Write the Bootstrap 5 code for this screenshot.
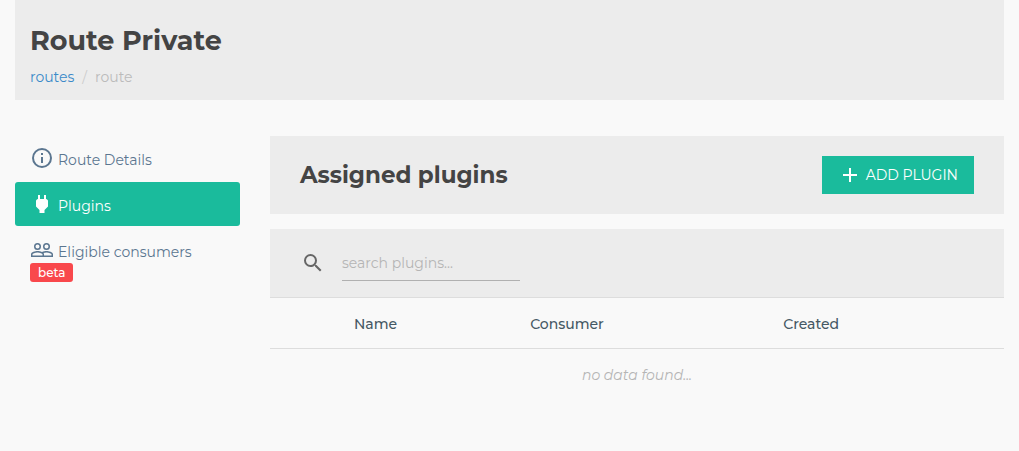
<!DOCTYPE html>
<html lang="en">
<head>
<meta charset="utf-8">
<meta name="viewport" content="width=device-width, initial-scale=1">
<title>Route Private</title>
<link href="https://cdn.jsdelivr.net/npm/bootstrap@5.3.0/dist/css/bootstrap.min.css" rel="stylesheet">
<style>
body{font-family:Montserrat,"Open Sans",sans-serif;font-size:14px;line-height:20px;background:#f9f9f9;color:#444}
.page{padding:0 15px}
.panel{background:#ececec}
.page-head{padding:25px 15px 13px}
h1{font-size:27px;line-height:32px;font-weight:700;margin:0 0 10px}
h2{font-size:23px;line-height:30px;font-weight:700;margin:0}
.breadcrumb{--bs-breadcrumb-divider-color:#ccc;--bs-breadcrumb-item-active-color:#bbb;--bs-breadcrumb-item-padding-x:8px}
.breadcrumb a{color:#3a8ac9;text-decoration:none}
.content-area{margin-top:36px;gap:30px}
.side{width:225px;gap:2px}
.side .nav-link{color:#5b7690;padding:10px 15px;border-radius:3px}
.side .nav-link:hover{color:#3f5870}
.side .nav-link.active{background:#1abb9c;color:#fff}
.side .entry{gap:4px}
.side .entry span{padding-top:4px}
.side svg{width:24px;height:24px;fill:currentColor}
.beta{background:#f9484c;font-size:12px;font-weight:500;line-height:13px;padding:3px 8px;border-radius:3px;margin-top:1px}
.title-bar{padding:20px 30px}
.btn-add,.btn-add:hover{background:#1abb9c;color:#fff}
.btn-add{border-radius:0;font-size:14px;line-height:24px;padding:6px 15px}
.search-bar{margin-top:15px;padding:14px 30px 16px;gap:16px}
.search-bar svg{margin-top:2px}
.search-field{width:178px;height:38px;border:0;border-bottom:1px solid #b0b0b0;border-radius:0;background:transparent;padding:2px 0 0;font-size:14px;color:#444}
.search-field::placeholder{color:#b5b5b5}
.plugins{--bs-table-bg:transparent;border-top:1px solid #ddd}
.plugins th{color:#455864;font-weight:500;padding:16px 8px 14px;border-bottom:1px solid #ddd}
.plugins td{color:#b5b5b5;padding:16px 8px;border:0}
.col-icon{width:76px}
.col-name{width:24%}
.col-consumer{width:253px}
</style>
</head>
<body>
<div class="page">
  <header class="panel page-head">
    <h1>Route Private</h1>
    <nav aria-label="breadcrumb">
      <ol class="breadcrumb mb-0">
        <li class="breadcrumb-item"><a href="#">routes</a></li>
        <li class="breadcrumb-item active" aria-current="page">route</li>
      </ol>
    </nav>
  </header>
  <div class="d-flex content-area">
    <nav class="nav flex-column flex-shrink-0 side" aria-label="Route sections">
      <a class="nav-link entry d-flex" href="#">
        <svg viewBox="0 0 24 24" aria-hidden="true"><path d="M11 17h2v-6h-2v6zm1-15a10 10 0 1 0 0 20 10 10 0 0 0 0-20zm0 18a8 8 0 1 1 0-16 8 8 0 0 1 0 16zM11 9h2V7h-2v2z"/></svg>
        <span>Route Details</span>
      </a>
      <a class="nav-link entry active d-flex" aria-current="page" href="#">
        <svg viewBox="0 0 24 24" aria-hidden="true"><path d="M16 7V3h-2v4h-4V3H8v4c-1 0-2 1-2 2v5.500l3.500 3.500v3h5v-3l3.500-3.500V9c0-1-1-2-2-2z"/></svg>
        <span>Plugins</span>
      </a>
      <a class="nav-link" href="#">
        <span class="entry d-flex">
          <svg viewBox="0 0 24 24" aria-hidden="true"><path d="M16.500 13c-1.200 0-3.070.34-4.500 1-1.430-.67-3.300-1-4.500-1C5.330 13 1 14.080 1 16.250V19h22v-2.750c0-2.170-4.330-3.250-6.500-3.250zm-4 4.500h-10v-1.250c0-.54 2.560-1.750 5-1.750s5 1.210 5 1.750v1.250zm9 0H14v-1.250c0-.46-.2-.86-.52-1.220.88-.3 1.960-.53 3.020-.53 2.440 0 5 1.210 5 1.750v1.250zM7.500 12a3.500 3.500 0 1 0 0-7 3.500 3.500 0 0 0 0 7zm0-5.500a2 2 0 1 1 0 4 2 2 0 0 1 0-4zm9 5.500a3.500 3.500 0 1 0 0-7 3.500 3.500 0 0 0 0 7zm0-5.500a2 2 0 1 1 0 4 2 2 0 0 1 0-4z"/></svg>
          <span>Eligible consumers</span>
        </span>
        <span class="badge beta d-table">beta</span>
      </a>
    </nav>
    <main class="flex-grow-1">
      <div class="panel title-bar d-flex justify-content-between align-items-center">
        <h2>Assigned plugins</h2>
        <button type="button" class="btn btn-add d-flex align-items-center gap-1">
          <svg width="24" height="24" viewBox="0 0 24 24" fill="currentColor" aria-hidden="true"><path d="M19 13h-6v6h-2v-6H5v-2h6V5h2v6h6v2z"/></svg>
          <span>ADD PLUGIN</span>
        </button>
      </div>
      <div class="panel search-bar d-flex align-items-center">
        <svg width="26" height="24" viewBox="0 0 24 24" fill="#666" aria-hidden="true"><path d="M15.500 14h-.79l-.28-.27A6.470 6.470 0 0 0 16 9.500 6.500 6.500 0 1 0 9.500 16c1.610 0 3.090-.59 4.230-1.570l.27.28v.79l5 4.990L20.490 19l-4.990-5zm-6 0a4.500 4.500 0 1 1 0-9 4.500 4.500 0 0 1 0 9z"/></svg>
        <input class="form-control search-field" type="text" placeholder="search plugins..." aria-label="search plugins">
      </div>
      <table class="table plugins mb-0">
        <thead>
          <tr><th class="col-icon"></th><th class="col-name" scope="col">Name</th><th class="col-consumer" scope="col">Consumer</th><th scope="col">Created</th></tr>
        </thead>
        <tbody>
          <tr><td colspan="4" class="text-center fst-italic">no data found...</td></tr>
        </tbody>
      </table>
    </main>
  </div>
</div>
<script src="https://cdn.jsdelivr.net/npm/bootstrap@5.3.0/dist/js/bootstrap.bundle.min.js"></script>
</body>
</html>
